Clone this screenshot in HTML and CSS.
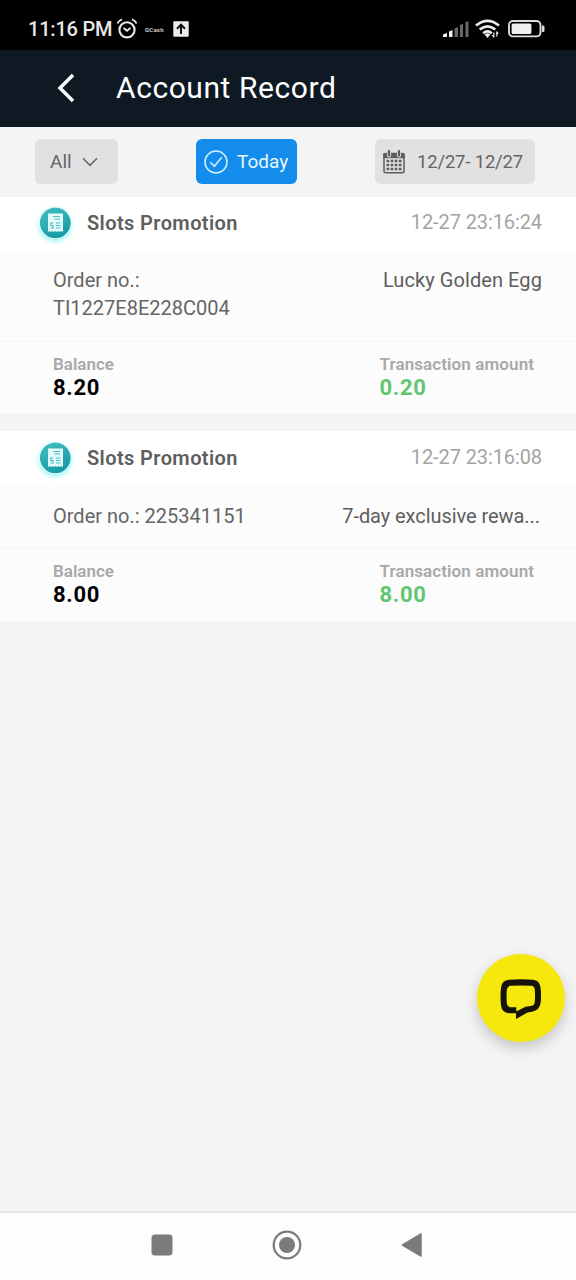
FILE: index.html
```html
<!DOCTYPE html>
<html lang="en">
<head>
<meta charset="utf-8">
<title>Account Record</title>
<link rel="stylesheet" href="styles.css">
</head>
<body>
<svg class="defs" width="0" height="0" aria-hidden="true">
  <linearGradient id="teal" x1="0" y1="0" x2="0.5" y2="1"><stop offset="0" stop-color="#45c3c3"/><stop offset="1" stop-color="#189ba6"/></linearGradient>
  <symbol id="receipt" viewBox="0 0 32 32">
    <circle cx="16.300" cy="15.800" r="15.4" fill="url(#teal)"/>
    <path d="M9 6.500h15v18.500l-1.500-1-1.500 1-1.500-1-1.500 1-1.500-1-1.500 1-1.500-1-1.500 1-1.500-1-1.500 1z" fill="#e2fbfb"/>
    <path d="M14 9.500h7M15.500 12h5.500M17 16h4.500M17 18.500h4.500M17 21h4.500M14.300 16h-2.600v2.500h2.300v2.500h-2.500" fill="none" stroke="#4fbcc2" stroke-width="1.100"/>
  </symbol>
</svg>
<div class="screen">
  <div class="status">
    <span class="clock">11:16 PM</span>
    <svg class="alarm" width="22" height="22" viewBox="0 0 22 22" fill="none" stroke="#e8e8e8"><circle cx="11" cy="11.8" r="7.6" stroke-width="2.1"/><path d="M7.6 10l3.4 2.7 3.4-2.7" stroke-width="1.9"/><path d="M1.4 5.5Q3 2.3 6 1.4M20.6 5.5Q19 2.3 16 1.4" stroke-width="1.7"/></svg>
    <span class="gcash">GCash</span>
    <svg class="upload" width="16" height="16" viewBox="0 0 16 16"><rect x=".3" y=".3" width="15.4" height="15.4" rx="1" fill="#ececec"/><path d="M8 13V4M4 7.7l4-4 4 4" fill="none" stroke="#111" stroke-width="2"/></svg>
    <svg class="signal" width="27" height="18" viewBox="0 0 27 18"><path d="M0 14.500l4-1.500v4H0z" fill="#f4f4f4"/><path d="M6 11.500L9.500 10v7H6z" fill="#f4f4f4"/><path d="M11.500 8.500L15 7v10h-3.500zM17 5l3-1.500V17h-3zM22.500 2.200L25.500 1v16h-3z" fill="#686868"/></svg>
    <svg class="wifi" width="26" height="20" viewBox="0 0 26 20" fill="none" stroke="#eee" stroke-width="2.600"><path d="M1 6.600Q12.500-3 24 6.600M4.700 10.600Q12.500 4.200 20.300 10.600M8.200 14.200Q12.500 10.700 16.800 14.200"/><path d="M9.500 15.300q3-2.300 6 0l-3 3.700z" fill="#eee" stroke="none"/><path d="M18.800 13.500v5M21.800 12.500v5" stroke-width="1.200"/><path d="M16.800 16l2 3v-3zM21.800 12l2 3h-2z" fill="#eee" stroke="none"/></svg>
    <svg class="battery" width="37" height="18" viewBox="0 0 37 18"><rect x="1" y="1" width="31.500" height="15.400" rx="4" fill="none" stroke="#ddd" stroke-width="1.900"/><rect x="3.600" y="3.500" width="19.800" height="10.400" rx="1.500" fill="#f0f0f0"/><path d="M34 5.500h1q1.500 0 1.500 1.500v3.500q0 1.500-1.500 1.500h-1z" fill="#ddd"/></svg>
  </div>
  <header class="header">
    <svg class="back" width="18" height="30" viewBox="0 0 18 30"><path d="M16 2L3 15l13 13" fill="none" stroke="#fff" stroke-width="3.500"/></svg>
    <h1>Account Record</h1>
  </header>
  <div class="filters">
    <div class="chip all"><span>All</span><svg width="16" height="10" viewBox="0 0 16 10"><path d="M1 1.300l7 7 7-7" fill="none" stroke="#666" stroke-width="1.600"/></svg></div>
    <div class="chip today"><svg width="24" height="24" viewBox="0 0 24 24" fill="none" stroke="#c9f0ff" stroke-width="1.600"><circle cx="12" cy="12" r="11"/><path d="M6.300 12.300l4 4 7.500-9"/></svg><span>Today</span></div>
    <div class="chip dates"><svg width="22" height="24" viewBox="0 0 22 24"><rect x="1" y="3.500" width="20" height="19.300" rx="1.500" fill="none" stroke="#5d5d5d" stroke-width="1.500"/><path d="M.3 3.200h21.400v5H.3z" fill="#5d5d5d"/><path d="M6 1v4.500M16 1v4.500" stroke="#e0e0e0" stroke-width="4.200" stroke-linecap="round"/><path d="M6 1.300v4M16 1.300v4" stroke="#5d5d5d" stroke-width="2.400" stroke-linecap="round"/><path d="M3.500 11h15M3.500 15h15M3.500 19h15" stroke="#5d5d5d" stroke-width="2.400" stroke-dasharray="2.700 1.400"/></svg><span>12/27- 12/27</span></div>
  </div>
  <main class="records">
    <section class="card">
      <div class="card-head"><svg class="receipt" width="32" height="32"><use href="#receipt"/></svg><h2>Slots Promotion</h2><time>12-27 23:16:24</time></div>
      <div class="card-body tall"><p class="order">Order no.:<br><span class="code">TI1227E8E228C004</span></p><p class="name">Lucky Golden Egg</p></div>
      <div class="card-foot"><div class="balance"><span>Balance</span><b>8.20</b></div><div class="amount"><span>Transaction amount</span><b>0.20</b></div></div>
    </section>
    <section class="card">
      <div class="card-head short"><svg class="receipt" width="32" height="32"><use href="#receipt"/></svg><h2>Slots Promotion</h2><time>12-27 23:16:08</time></div>
      <div class="card-body"><p class="order">Order no.: 225341151</p><p class="name cut">7-day exclusive rewa...</p></div>
      <div class="card-foot"><div class="balance"><span>Balance</span><b>8.00</b></div><div class="amount"><span>Transaction amount</span><b>8.00</b></div></div>
    </section>
  </main>
  <div class="chat"><svg width="42" height="42" viewBox="0 0 42 42"><path fill-rule="evenodd" d="M9 2.800Q21 1.600 33 2.800Q39.800 3.500 40.500 10.500Q41.500 18.500 40.500 26.500Q39.500 32.500 33 34.500L27.500 35.500L16 42V36.300H9Q1.800 35.500 1 28.500Q0 19.500 1 10.500Q1.800 3.500 9 2.800ZM10.500 8.800Q7.200 9.200 6.900 12.300Q6.200 19.500 6.900 26.800Q7.200 29.800 10.500 30.200H16.300V34.500L25.500 29.800L31 29Q34.300 28.500 34.700 25.500Q35.400 18.500 34.700 12.300Q34.300 9.200 31 8.800Q21 8 10.500 8.800Z" fill="#14140b"/></svg></div>
  <nav class="nav">
    <svg width="22" height="22" viewBox="0 0 22 22"><rect x=".5" y=".5" width="21" height="21" rx="3.500" fill="#7b7b7b"/></svg>
    <svg width="30" height="30" viewBox="0 0 30 30"><circle cx="15" cy="15" r="13.300" fill="none" stroke="#7b7b7b" stroke-width="2.200"/><circle cx="15" cy="15" r="8" fill="#7b7b7b"/></svg>
    <svg width="22" height="26" viewBox="0 0 22 26"><path d="M1.500 13L20 2v22z" fill="#7b7b7b" stroke="#7b7b7b" stroke-width="1.500" stroke-linejoin="round"/></svg>
  </nav>
</div>
</body>
</html>
```
FILE: styles.css
```css
* { box-sizing: border-box; }
body { margin: 0; font-family: Roboto, sans-serif; color: #656565; }
h1, h2, p { margin: 0; }
svg { display: block; flex: none; }
.defs { position: absolute; }
.screen { width: 576px; height: 1280px; display: flex; flex-direction: column; background: #f4f4f4; overflow: hidden; position: relative; white-space: nowrap; }
.status { height: 50px; background: #000; display: flex; align-items: center; padding: 8px 31px 0 28px; color: #e8e8e8; flex: none; }
.clock { font-size: 20px; line-height: 24px; font-weight: 500; width: 88px; letter-spacing: -0.2px; }
.gcash { font-size: 6px; font-weight: 500; margin-left: 7px; width: 21px; letter-spacing: 0.2px; }
.upload { margin-left: 7px; }
.signal { margin-left: auto; margin-right: 5px; }
.wifi { margin-right: 7px; }
.header { height: 77px; background: #0e1924; display: flex; align-items: center; padding: 0 0 1px 57px; flex: none; }
.header h1 { margin-left: 41px; color: #fff; font-size: 30px; font-weight: 400; line-height: 36px; letter-spacing: 0.57px; }
.filters { height: 70px; display: flex; padding: 12px 41px 0 35px; flex: none; }
.chip { height: 45px; border-radius: 6px; background: #e1e1e1; display: flex; align-items: center; font-size: 19px; line-height: 24px; }
.all { width: 83px; padding-left: 15px; gap: 10px; }
.today { width: 101px; margin-left: 78px; padding-left: 8px; gap: 9px; background: #148ceb; color: #e6f8ff; }
.dates { width: 160px; margin-left: auto; padding-left: 8px; gap: 12px; font-size: 18.500px; letter-spacing: -0.18px; }
.records { display: flex; flex-direction: column; gap: 18px; }
.card { background: #fcfcfc; }
.card-head { height: 54px; background: #fff; display: flex; align-items: flex-start; padding: 10px 34px 0 39px; }
.card-head.short { height: 51px; padding-top: 11px; }
.card-head h2 { margin-left: 16px; font-size: 20px; line-height: 32px; font-weight: 600; letter-spacing: 0.4px; color: #5e5e5e; }
.card-head time { margin-left: auto; font-size: 20px; line-height: 31px; letter-spacing: -0.1px; color: #a4a4a4; }
.receipt { border-radius: 50%; box-shadow: 0 2px 5px #8cf4f4; }
.card-body { height: 67px; padding: 20px 34px 0 53px; display: flex; justify-content: space-between; font-size: 20px; line-height: 28px; border-bottom: 1px solid #f4f4f4; }
.card-body.tall { height: 91px; padding-top: 15px; }
.name { color: #5e5e5e; letter-spacing: 0.08px; }
.cut { padding-right: 2px; letter-spacing: -0.06px; }
.card-foot { height: 72px; padding: 12px 0 0 53px; display: flex; font-weight: 600; }
.tall + .card-foot { height: 71px; }
.balance { width: 326.500px; }
.card-foot span { display: block; font-size: 17px; line-height: 20px; color: #a8a8a8; }
.amount span { letter-spacing: 0.1px; }
.card-foot b { display: block; font-size: 22px; line-height: 27px; font-weight: 700; letter-spacing: 0.7px; color: #000; }
.card-foot .amount b { color: #60c771; }
.chat { position: absolute; left: 477px; top: 954px; width: 88px; height: 88px; border-radius: 50%; background: #f6e70c; display: grid; place-items: center; box-shadow: 0 6px 14px rgba(0,0,0,.2); }
.nav { margin-top: auto; height: 69px; background: #fdfdfe; border-top: 2px solid #e5e5e5; display: flex; align-items: center; justify-content: space-between; padding: 0 153px 3px 151px; flex: none; }
```
